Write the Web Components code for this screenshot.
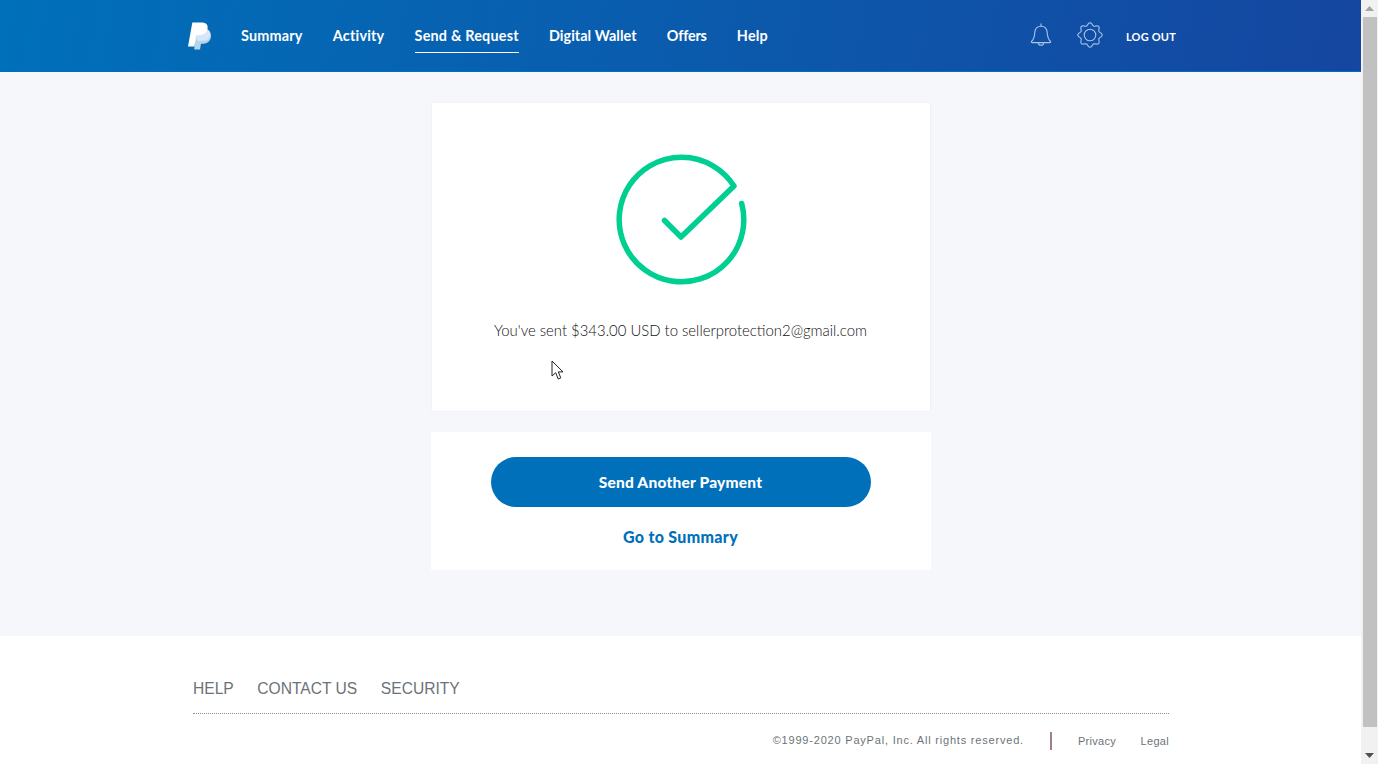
<!DOCTYPE html>
<html>
<head>
<meta charset="utf-8">
<title>PayPal</title>
<style>
  html, body { margin: 0; height: 100%; overflow: hidden; }
  body { display: flex; font-family: Lato, "Liberation Sans", sans-serif; background: #f5f7fa; }
  pp-page { flex: 1; min-width: 0; }
</style>
</head>
<body>
<pp-page>
  <pp-header></pp-header>
  <pp-main>
    <pp-receipt>You've sent $343.00 USD to sellerprotection2@gmail.com</pp-receipt>
    <pp-actions></pp-actions>
  </pp-main>
  <pp-footer></pp-footer>
</pp-page>
<pp-scrollbar></pp-scrollbar>

<script>
  // wavy outline for the settings icon
  function gearPath() {
    let d = ''
    for (let i = 0; i < 96; i++) {
      const a = i / 96 * Math.PI * 2
      const r = 10.9 + 1.3 * Math.cos(a * 8)
      d += (i ? 'L' : 'M') + (13 + r * Math.cos(a)).toFixed(2) + ' ' + (13 + r * Math.sin(a)).toFixed(2)
    }
    return d + 'Z'
  }

  class Page extends HTMLElement {
    constructor() {
      super()
      this.attachShadow({ mode: 'open' }).innerHTML = `
        <style>
          :host { display: flex; flex-direction: column; height: 764px; }
        </style>
        <slot></slot>`
    }
  }

  class Header extends HTMLElement {
    constructor() {
      super()
      this.attachShadow({ mode: 'open' }).innerHTML = `
        <style>
          :host {
            display: flex;
            align-items: center;
            height: 72px;
            box-sizing: border-box;
            padding: 0 185px 0 188px;
            background: linear-gradient(100deg, #0070ba 0%, #1546a0 100%);
            border-bottom: 1px solid #0070ba;
            color: #fff;
          }
          .logo { display: block; margin-right: 29px; margin-top: 1px; }
          nav { display: flex; gap: 30.2px; font: 700 14.4px Lato, sans-serif; letter-spacing: .2px; margin-top: 1px; }
          nav a { position: relative; line-height: 20px; }
          nav a.wallet { letter-spacing: .05px; }
          nav a.offers { letter-spacing: -.2px; }
          nav a.active::after {
            content: '';
            position: absolute;
            left: 0;
            right: 0;
            bottom: -7px;
            height: 1px;
            background: #fff;
          }
          .right { margin-left: auto; display: flex; align-items: center; }
          .bell { display: block; margin: -2px 25px 0 0; }
          .gear { display: block; margin: -2px 23px 0 0; }
          .logout { font: 700 11px Lato, sans-serif; letter-spacing: .2px; margin-top: 1px; }
        </style>
        <svg class="logo" width="24" height="28" viewBox="0 0 25 28">
          <path fill="#b5d3ea" d="M8 7h9c4 0 7 2 7 7 0 5-4 8-8 8h-2.500l-1 6H6.500z"/>
          <path fill="#d9e8f5" d="M7 6h8c5 0 8 2 8 6 0 1 0 2-.4 3-1.200 3-3.600 4-7 4H9.500z" opacity=".95"/>
          <path fill="#fff" d="M4.500 0H14c4.500 0 7 2.200 6.400 6-.8 4.800-3.500 7-8.400 7H8.800L6.600 25H0z"/>
        </svg>
        <nav>
          <a>Summary</a>
          <a>Activity</a>
          <a class="active">Send &amp; Request</a>
          <a class="wallet">Digital Wallet</a>
          <a class="offers">Offers</a>
          <a>Help</a>
        </nav>
        <div class="right">
          <svg class="bell" width="22" height="26" viewBox="0 0 24 27" fill="none" stroke="#a9c4e6" stroke-width="1.200">
            <path d="M12 1v3"/>
            <path d="M12 4c-4.500 0-6.500 3.200-6.800 7-.3 4.200-.8 7-3.400 9.300-.7.700-.4 1.500.5 1.500h19.400c.9 0 1.200-.8.500-1.500-2.600-2.300-3.100-5.100-3.400-9.300-.3-3.800-2.300-7-6.800-7z"/>
            <path d="M9 22c.3 1.800 1.500 2.600 3 2.600s2.700-.8 3-2.600"/>
          </svg>
          <svg class="gear" width="26" height="26" viewBox="0 0 26 26" fill="none" stroke="#a9c4e6" stroke-width="1.100" stroke-linejoin="round">
            <circle cx="13" cy="13" r="5.800"/>
            <path d="${gearPath()}"/>
          </svg>
          <span class="logout">LOG OUT</span>
        </div>`
    }
  }

  class Main extends HTMLElement {
    constructor() {
      super()
      this.attachShadow({ mode: 'open' }).innerHTML = `
        <style>
          :host {
            display: flex;
            flex-direction: column;
            align-items: center;
            gap: 21px;
            height: 564px;
            box-sizing: border-box;
            padding-top: 31px;
            background: #f5f7fa;
          }
        </style>
        <slot></slot>`
    }
  }

  class Receipt extends HTMLElement {
    constructor() {
      super()
      this.attachShadow({ mode: 'open' }).innerHTML = `
        <style>
          :host {
            display: flex;
            flex-direction: column;
            align-items: center;
            box-sizing: border-box;
            width: 498px;
            height: 308px;
            padding-top: 50px;
            background: #fff;
            box-shadow: 0 0 1px rgba(0,0,0,.12);
            position: relative;
          }
          svg { display: block; }
          p {
            margin: 35px 0 0;
            font: 300 14.9px/20px Lato, sans-serif;
            color: #111;
            white-space: nowrap;
          }
          .cursor { position: absolute; left: 119px; top: 257px; }
        </style>
        <svg width="132" height="132" viewBox="0 0 132 132" fill="none" stroke="#00cf92" stroke-width="5.500" stroke-linecap="round" stroke-linejoin="round">
          <path d="M126.700 50.500A62.300 62.300 0 1 1 119 33L66 84 49.500 67.500"/>
        </svg>
        <p><slot></slot></p>
        <svg class="cursor" width="14" height="21" viewBox="0 0 14 21">
          <path d="M1 1v15l3.700-3.300L7.200 19l2.600-1.100-2.500-6H12z" fill="#fff" stroke="#222" stroke-width="1"/>
        </svg>`
    }
  }

  class Actions extends HTMLElement {
    constructor() {
      super()
      this.attachShadow({ mode: 'open' }).innerHTML = `
        <style>
          :host {
            display: flex;
            flex-direction: column;
            align-items: center;
            box-sizing: border-box;
            width: 500px;
            height: 138px;
            padding-top: 25px;
            background: #fff;
          }
          .btn {
            display: flex;
            align-items: center;
            justify-content: center;
            width: 380px;
            height: 50px;
            border-radius: 25px;
            background: #0070ba;
            color: #fff;
            font: 900 15.5px Lato, sans-serif;
            letter-spacing: .2px;
          }
          .link {
            margin-top: 20px;
            color: #0070ba;
            font: 900 16px/20px Lato, sans-serif;
            letter-spacing: .3px;
          }
        </style>
        <div class="btn">Send Another Payment</div>
        <div class="link">Go to Summary</div>`
    }
  }

  class Footer extends HTMLElement {
    constructor() {
      super()
      this.attachShadow({ mode: 'open' }).innerHTML = `
        <style>
          :host {
            display: block;
            flex: 1;
            box-sizing: border-box;
            padding: 43px 192px 0 193px;
            background: #fff;
            font-family: "Liberation Sans", Arial, sans-serif;
            color: #6c7378;
          }
          .top {
            display: flex;
            gap: 23.6px;
            font-size: 15.6px;
            line-height: 19px;
            padding-bottom: 15px;
            border-bottom: 1px dotted #8a8f94;
          }
          .bottom {
            display: flex;
            align-items: center;
            justify-content: flex-end;
            height: 20px;
            margin-top: 17px;
            font-size: 11px;
          }
          .copy { letter-spacing: .8px; margin-top: -2px; }
          .bar { width: 2px; height: 18px; background: #a0808c; margin: 0 26px; }
          .links { display: flex; gap: 24.500px; letter-spacing: .3px; color: #6c7378; }
        </style>
        <div class="top"><a>HELP</a><a>CONTACT US</a><a>SECURITY</a></div>
        <div class="bottom">
          <span class="copy">©1999-2020 PayPal, Inc. All rights reserved.</span>
          <span class="bar"></span>
          <div class="links"><a>Privacy</a><a>Legal</a></div>
        </div>`
    }
  }

  class Scrollbar extends HTMLElement {
    constructor() {
      super()
      this.attachShadow({ mode: 'open' }).innerHTML = `
        <style>
          :host {
            display: flex;
            flex-direction: column;
            align-items: stretch;
            width: 17px;
            height: 764px;
            background: #f1f1f1;
          }
          .arrow { height: 17px; display: flex; align-items: center; justify-content: center; }
          .thumb { height: 710px; margin: 0 1px 0 2px; background: #c1c1c1; }
          .space { flex: 1; }
        </style>
        <div class="arrow">
          <svg width="9" height="5" viewBox="0 0 9 5"><path d="M4.500 0 9 5H0z" fill="#a3a3a3"/></svg>
        </div>
        <div class="thumb"></div>
        <div class="space"></div>
        <div class="arrow">
          <svg width="9" height="5" viewBox="0 0 9 5"><path d="M0 0h9L4.500 5z" fill="#505050"/></svg>
        </div>`
    }
  }

  customElements.define('pp-page', Page)
  customElements.define('pp-header', Header)
  customElements.define('pp-main', Main)
  customElements.define('pp-receipt', Receipt)
  customElements.define('pp-actions', Actions)
  customElements.define('pp-footer', Footer)
  customElements.define('pp-scrollbar', Scrollbar)
</script>
</body>
</html>
